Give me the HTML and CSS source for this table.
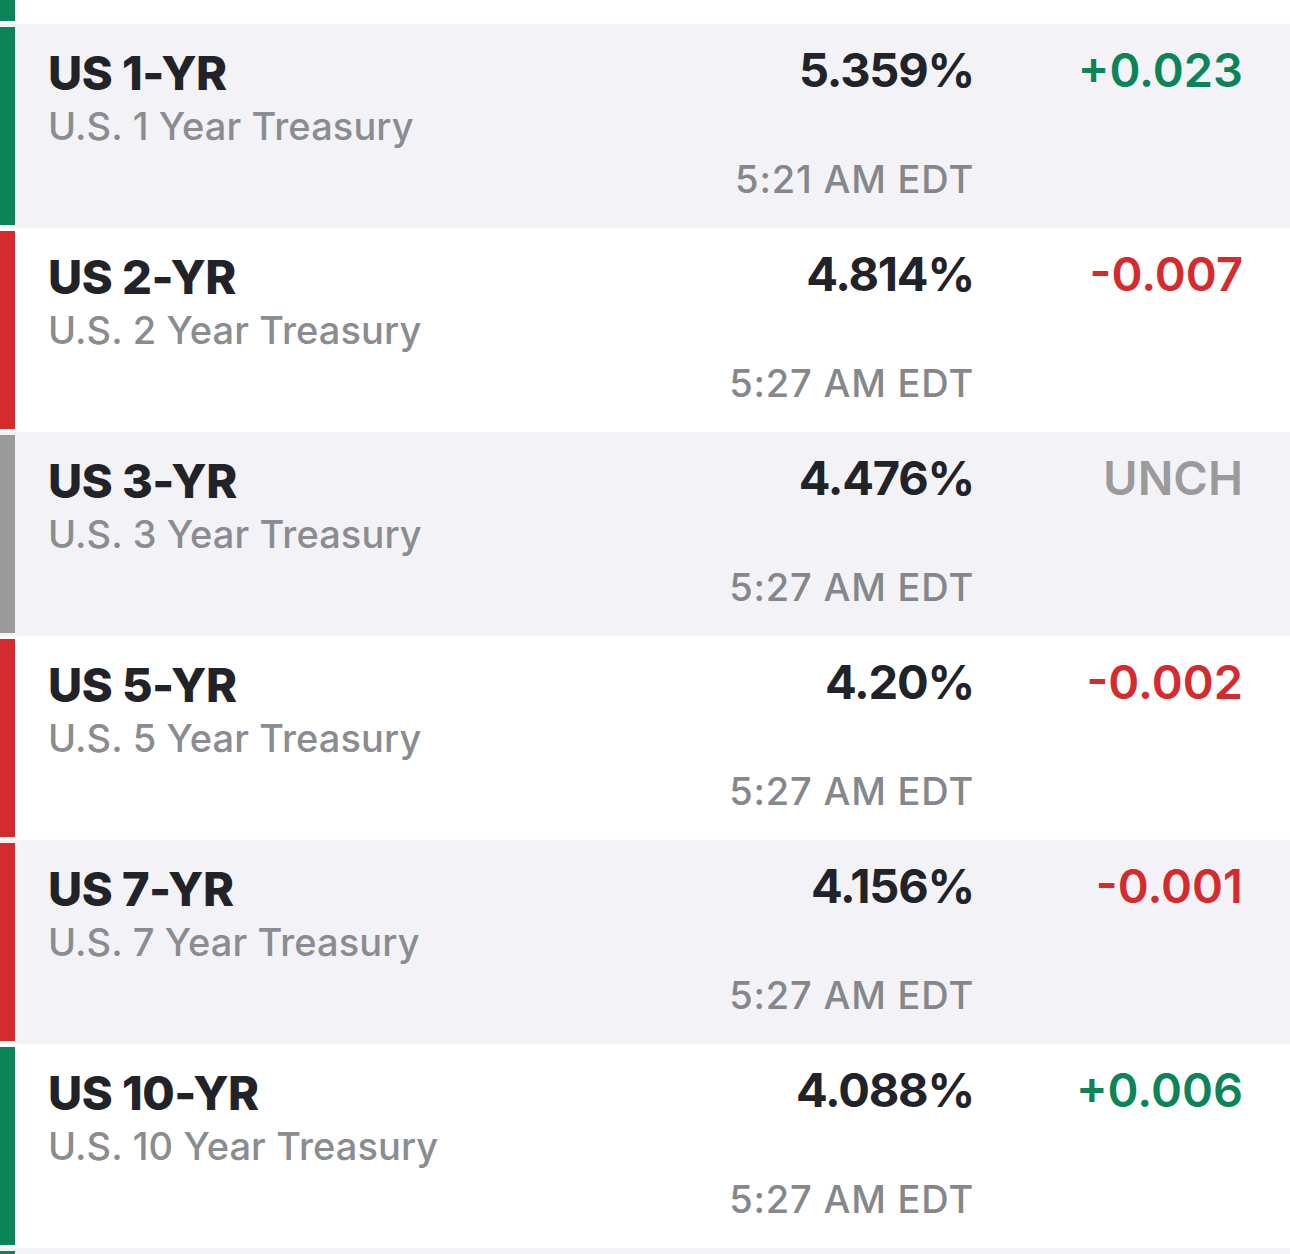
FILE: index.html
```html
<!DOCTYPE html>
<html lang="en">
<head>
<meta charset="utf-8">
<title>US Treasuries</title>
<link rel="stylesheet" href="styles.css">
</head>
<body>
<div class="list">
  <div class="row row--clipped">
    <div class="bar bar--up"></div>
  </div>

  <div class="row row--alt">
    <div class="bar bar--up"></div>
    <div class="info">
      <div class="symbol">US 1-YR</div>
      <div class="name">U.S. 1 Year Treasury</div>
    </div>
    <div class="quote">
      <div class="price">5.359%</div>
      <div class="time">5:21 AM EDT</div>
    </div>
    <div class="change change--up">+0.023</div>
  </div>

  <div class="row">
    <div class="bar bar--down"></div>
    <div class="info">
      <div class="symbol">US 2-YR</div>
      <div class="name">U.S. 2 Year Treasury</div>
    </div>
    <div class="quote">
      <div class="price">4.814%</div>
      <div class="time">5:27 AM EDT</div>
    </div>
    <div class="change change--down">-0.007</div>
  </div>

  <div class="row row--alt">
    <div class="bar bar--flat"></div>
    <div class="info">
      <div class="symbol">US 3-YR</div>
      <div class="name">U.S. 3 Year Treasury</div>
    </div>
    <div class="quote">
      <div class="price">4.476%</div>
      <div class="time">5:27 AM EDT</div>
    </div>
    <div class="change change--flat">UNCH</div>
  </div>

  <div class="row">
    <div class="bar bar--down"></div>
    <div class="info">
      <div class="symbol">US 5-YR</div>
      <div class="name">U.S. 5 Year Treasury</div>
    </div>
    <div class="quote">
      <div class="price">4.20%</div>
      <div class="time">5:27 AM EDT</div>
    </div>
    <div class="change change--down">-0.002</div>
  </div>

  <div class="row row--alt">
    <div class="bar bar--down"></div>
    <div class="info">
      <div class="symbol">US 7-YR</div>
      <div class="name">U.S. 7 Year Treasury</div>
    </div>
    <div class="quote">
      <div class="price">4.156%</div>
      <div class="time">5:27 AM EDT</div>
    </div>
    <div class="change change--down">-0.001</div>
  </div>

  <div class="row">
    <div class="bar bar--up"></div>
    <div class="info">
      <div class="symbol">US 10-YR</div>
      <div class="name">U.S. 10 Year Treasury</div>
    </div>
    <div class="quote">
      <div class="price">4.088%</div>
      <div class="time">5:27 AM EDT</div>
    </div>
    <div class="change change--up">+0.006</div>
  </div>

  <div class="row row--alt row--clipped">
    <div class="bar bar--up"></div>
  </div>
</div>
</body>
</html>
```

FILE: styles.css
```css
html, body {
  margin: 0;
  padding: 0;
  background: #ffffff;
}

body {
  font-family: Inter, "Open Sans", "Liberation Sans", sans-serif;
  overflow: hidden;
}

.list {
  display: flex;
  flex-direction: column;
}

.row {
  display: flex;
  height: 204px;
  background: #ffffff;
  box-sizing: border-box;
}

.row--alt {
  background: #f3f3f7;
}

.row--clipped {
  height: 24px;
}

.list > .row--clipped:first-child .bar {
  margin-top: 0;
}

.bar {
  flex: none;
  width: 15px;
  margin: 3px 0;
}

.bar--up { background: #0b8457; }
.bar--down { background: #d52b2e; }
.bar--flat { background: #9b9b9b; }

.info {
  flex: 1;
  padding-left: 33px;
  padding-top: 25px;
}

.symbol {
  font-size: 47px;
  line-height: 47px;
  font-weight: 800;
  color: #212328;
  letter-spacing: -0.5px;
}

.name {
  margin-top: 11px;
  font-size: 38px;
  line-height: 38px;
  font-weight: 500;
  color: #8a8c90;
  letter-spacing: 0.1px;
}

.quote {
  display: flex;
  flex-direction: column;
  align-items: flex-end;
  padding-top: 22px;
}

.price {
  font-size: 47px;
  line-height: 47px;
  font-weight: 700;
  color: #212328;
  letter-spacing: -1.2px;
}

.time {
  margin-top: 67px;
  font-size: 38px;
  line-height: 38px;
  font-weight: 500;
  color: #85878b;
  letter-spacing: 0.8px;
}

.change {
  flex: none;
  width: 316px;
  box-sizing: border-box;
  padding-right: 47px;
  padding-top: 22px;
  text-align: right;
  font-size: 47px;
  line-height: 47px;
  font-weight: 600;
}

.change--up { color: #0b8457; }
.change--down { color: #d52b2e; }
.change--flat { color: #9b9b9b; }
```
